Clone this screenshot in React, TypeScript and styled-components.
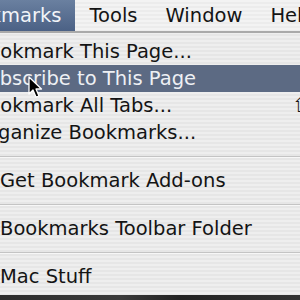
import React from 'react'
import styled, { createGlobalStyle } from 'styled-components'

const GlobalStyle = createGlobalStyle`
  html, body {
    margin: 0;
    padding: 0;
    width: 300px;
    height: 300px;
    overflow: hidden;
    background: #e9e9e9;
  }
  * { box-sizing: border-box; }
`

interface IMenuItem {
  label: string
  indent?: boolean
  active?: boolean
  shortcut?: string
  separator?: boolean
}

const items: IMenuItem[] = [
  { label: 'Bookmark This Page...' },
  { label: 'Subscribe to This Page', active: true },
  { label: 'Bookmark All Tabs...', shortcut: '⇧⌘D' },
  { label: 'Organize Bookmarks...' },
  { label: '', separator: true },
  { label: 'Get Bookmark Add-ons', indent: true },
  { label: '', separator: true },
  { label: 'Bookmarks Toolbar Folder', indent: true },
  { label: '', separator: true },
  { label: 'Mac Stuff', indent: true },
]

const titles = ['Bookmarks', 'Tools', 'Window', 'Help']

const App: React.FC = () => {
  return (
    <Screen>
      <GlobalStyle />
      <MenuBar>
        {titles.map((t, i) => (
          <BarTitle key={t} open={i === 0}>{t}</BarTitle>
        ))}
      </MenuBar>
      <Menu>
        {items.map((item, i) =>
          item.separator ? (
            <Separator key={i} />
          ) : (
            <Row key={i} active={!!item.active} indent={!!item.indent}>
              <span>{item.label}</span>
              {item.shortcut && <Shortcut>{item.shortcut}</Shortcut>}
            </Row>
          )
        )}
      </Menu>
      <Dock />
      <Cursor width="16" height="24" viewBox="0 0 16 24">
        <path
          d="M1 1 L1 18 L5 14 L8 21 L11 20 L8 13 L13.5 13 Z"
          fill="#000"
          stroke="#fff"
          strokeWidth="1.3"
          strokeLinejoin="round"
        />
      </Cursor>
    </Screen>
  )
}

export default App

const Screen = styled.div`
  position: relative;
  width: 300px;
  height: 300px;
  overflow: hidden;
  display: flex;
  flex-direction: column;
  font-family: "DejaVu Sans", "Liberation Sans", sans-serif;
  font-size: 19.5px;
  color: #141414;
  background: repeating-linear-gradient(to bottom, #eeeeee 0 2px, #e6e6e6 2px 4px);
`

const MenuBar = styled.div`
  display: flex;
  height: 33px;
  margin-left: -61.5px;
  background: repeating-linear-gradient(to bottom, #f3f3f3 0 2px, #ececec 2px 4px);
  border-bottom: 2px solid #a9a9a9;
  white-space: nowrap;
`

const BarTitle = styled.div<{ open: boolean }>`
  height: 31px;
  line-height: 31px;
  padding: 0 14px;
  flex-shrink: 0;
  color: ${({ open }) => (open ? '#f2f4f8' : '#141414')};
  background: ${({ open }) => (open ? 'linear-gradient(to bottom, #6a80a0, #4b6185)' : 'transparent')};
`

const Menu = styled.div`
  display: flex;
  flex-direction: column;
  margin-left: -25px;
  padding-top: 5px;
  flex: 1;
`

const Row = styled.div<{ active: boolean; indent: boolean }>`
  display: grid;
  grid-template-columns: 317px auto;
  height: 27px;
  line-height: 28px;
  padding-left: ${({ indent }) => (indent ? '25px' : '0')};
  white-space: nowrap;
  color: ${({ active }) => (active ? '#eef0f4' : '#141414')};
  background: ${({ active }) => (active ? '#5c6a83' : 'transparent')};
`

const Shortcut = styled.span`
  font-size: 19.5px;
`

const Separator = styled.div`
  height: 21px;
  display: flex;
  align-items: center;

  &:after {
    content: "";
    flex: 1;
    height: 1px;
    background: #c4c4c4;
    box-shadow: 0 1px 0 #f7f7f7;
  }
`

const Dock = styled.div`
  height: 5px;
  background: linear-gradient(to right, #2c2c2c, #3a3a3a 40%, #222 60%, #333);
`

const Cursor = styled.svg`
  position: absolute;
  left: 28px;
  top: 76px;
`
